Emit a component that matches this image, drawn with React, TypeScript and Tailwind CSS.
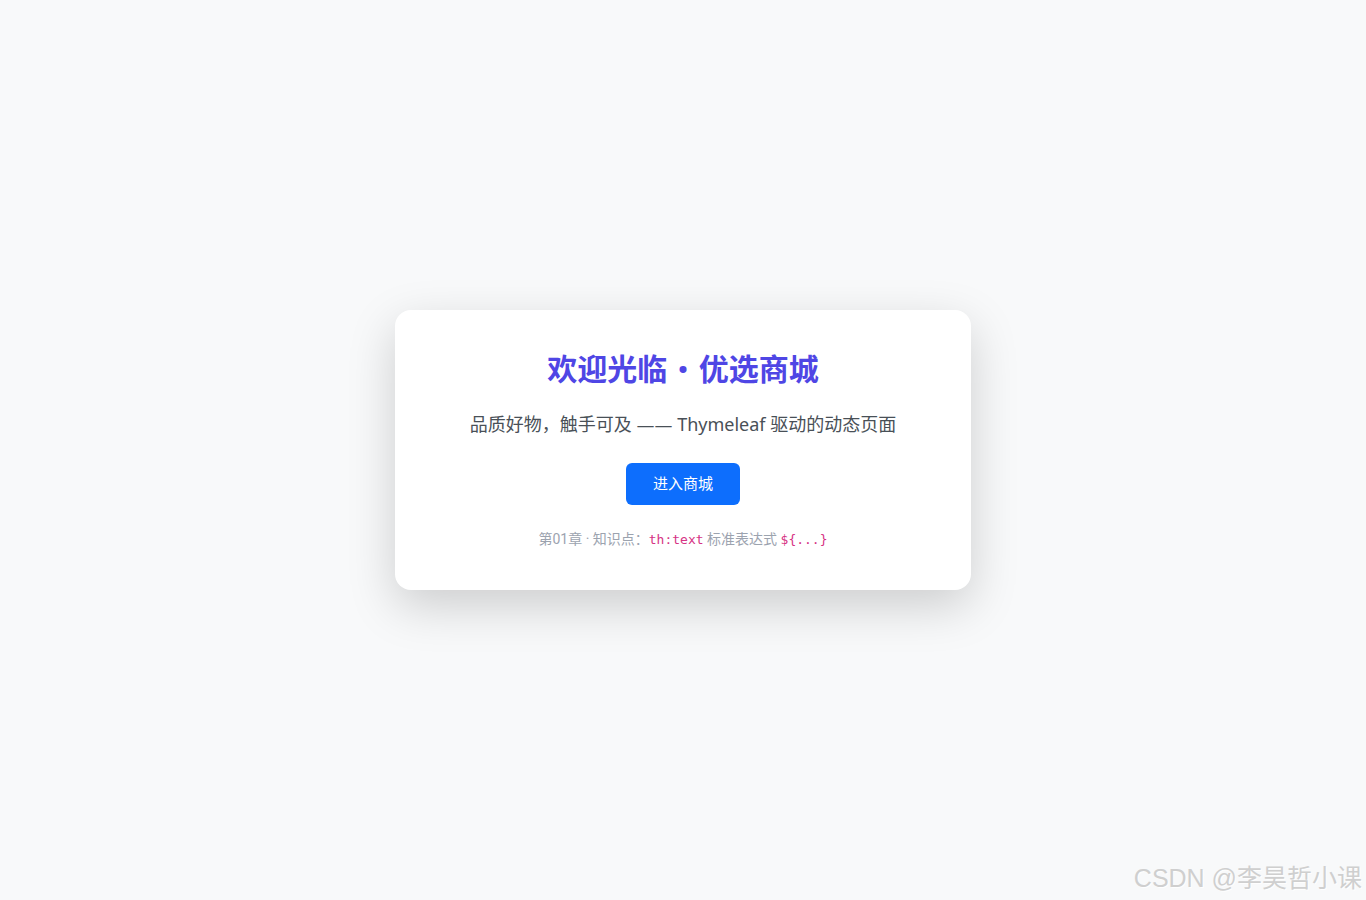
import React from "react";

export default function App() {
  return (
    <div className="relative min-h-screen w-full bg-[#f8f9fa] flex items-center justify-center font-['Segoe_UI','Roboto','Noto_Sans','Liberation_Sans','Noto_Sans_CJK_SC',sans-serif]">
      <div className="w-[576px] h-[280px] bg-white rounded-[16px] shadow-[0_16px_48px_rgba(0,0,0,0.175)] flex flex-col items-center pt-[38px]">
        <h1 className="text-[30px] leading-[44px] font-bold text-[#4f46e5] whitespace-pre">
          {"欢迎光临 "}
          <span className="mx-[3px]">•</span>
          {" 优选商城"}
        </h1>
        <p className="mt-[18px] h-[28px] text-[18px] leading-[28px] text-[#495057] whitespace-pre font-['Noto_Sans','Roboto','Noto_Sans_CJK_SC',sans-serif]">
          {"品质好物，触手可及 "}
          <span className="leading-none font-['DejaVu_Sans',sans-serif]">——</span>
          {" Thymeleaf 驱动的动态页面"}
        </p>
        <button className="mt-[25px] w-[114px] h-[42px] rounded-[6px] bg-[#0d6efd] text-white text-[15px] leading-none">
          进入商城
        </button>
        <div className="mt-[24px] text-[14px] leading-[20px] text-[#9ca3af]">
          第01章 · 知识点：
          <code className="text-[#d63384] text-[13px] font-['DejaVu_Sans_Mono','Liberation_Mono',monospace]">
            th:text
          </code>{" "}
          标准表达式{" "}
          <code className="text-[#d63384] text-[13px] font-['DejaVu_Sans_Mono','Liberation_Mono',monospace]">
            {"${...}"}
          </code>
        </div>
      </div>
      <div className="absolute right-[4px] bottom-[6px] text-[25px] leading-[32px] font-normal text-[#cfcfcf] [text-shadow:1px_1px_0px_rgba(255,255,255,0.9)] font-['Liberation_Sans','Noto_Sans_CJK_SC',sans-serif]">
        CSDN @李昊哲小课
      </div>
    </div>
  );
}
